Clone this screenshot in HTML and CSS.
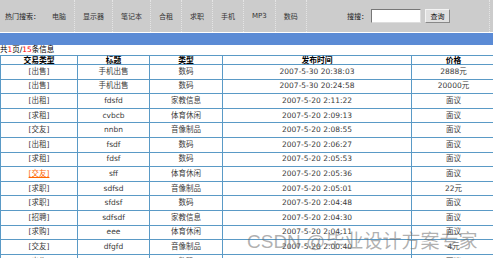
FILE: index.html
```html
<!DOCTYPE html>
<html lang="zh-CN">
<head>
    <meta charset="UTF-8">
    <title>信息列表</title>
    <link rel="stylesheet" href="styles.css">
</head>
<body>
    <div class="topbar">
        <span class="hot-label">热门搜索：</span>
        <ul class="hot-list">
            <li><a href="#">电脑</a></li>
            <li><a href="#">显示器</a></li>
            <li><a href="#">笔记本</a></li>
            <li><a href="#">合租</a></li>
            <li><a href="#">求职</a></li>
            <li><a href="#">手机</a></li>
            <li><a href="#">MP3</a></li>
            <li><a href="#">数码</a></li>
        </ul>
        <form class="search">
            <label for="kw">搜搜：</label>
            <input id="kw" type="text">
            <button type="button">查询</button>
        </form>
    </div>
    <div class="bluebar"></div>

    <div class="pager">共<span class="num">1</span>页/<span class="num">15</span>条信息</div>

    <table class="list">
        <colgroup>
            <col class="c-type">
            <col class="c-title">
            <col class="c-cat">
            <col class="c-time">
            <col class="c-price">
        </colgroup>
        <tr>
            <th>交易类型</th>
            <th>标题</th>
            <th>类型</th>
            <th>发布时间</th>
            <th>价格</th>
        </tr>
        <tr><td>[出售]</td><td>手机出售</td><td>数码</td><td>2007-5-30 20:38:03</td><td>2888元</td></tr>
        <tr><td>[出售]</td><td>手机出售</td><td>数码</td><td>2007-5-30 20:24:58</td><td>20000元</td></tr>
        <tr><td>[出租]</td><td>fdsfd</td><td>家教信息</td><td>2007-5-20 2:11:22</td><td>面议</td></tr>
        <tr><td>[求租]</td><td>cvbcb</td><td>体育休闲</td><td>2007-5-20 2:09:13</td><td>面议</td></tr>
        <tr><td>[交友]</td><td>nnbn</td><td>音像制品</td><td>2007-5-20 2:08:55</td><td>面议</td></tr>
        <tr><td>[出租]</td><td>fsdf</td><td>数码</td><td>2007-5-20 2:06:27</td><td>面议</td></tr>
        <tr><td>[求租]</td><td>fdsf</td><td>数码</td><td>2007-5-20 2:05:53</td><td>面议</td></tr>
        <tr><td><a class="hover" href="#">[交友]</a></td><td>sff</td><td>体育休闲</td><td>2007-5-20 2:05:36</td><td>面议</td></tr>
        <tr><td>[求职]</td><td>sdfsd</td><td>音像制品</td><td>2007-5-20 2:05:01</td><td>22元</td></tr>
        <tr><td>[求职]</td><td>sfdsf</td><td>数码</td><td>2007-5-20 2:04:48</td><td>面议</td></tr>
        <tr><td>[招聘]</td><td>sdfsdf</td><td>家教信息</td><td>2007-5-20 2:04:30</td><td>面议</td></tr>
        <tr><td>[求购]</td><td>eee</td><td>体育休闲</td><td>2007-5-20 2:04:11</td><td>面议</td></tr>
        <tr><td>[交友]</td><td>dfgfd</td><td>音像制品</td><td>2007-5-20 2:00:40</td><td>4元</td></tr>
        <tr><td>[出售]</td><td>asdf</td><td>数码</td><td>2007-5-20 1:58:12</td><td>面议</td></tr>
        <tr><td>[求购]</td><td>sdf</td><td>家教信息</td><td>2007-5-20 1:57:36</td><td>面议</td></tr>
    </table>

    <div class="watermark">CSDN @毕业设计方案专家</div>
</body>
</html>
```

FILE: styles.css
```css
html, body {
    margin: 0;
    height: 100%;
}

body {
    position: relative;
    overflow: hidden;
    background: #ffffff;
    color: #333333;
    font-family: "DejaVu Sans", "Noto Sans CJK SC", sans-serif;
    font-size: 7.5px;
}

a {
    color: #333333;
    text-decoration: none;
}

/* top search bar */
.topbar {
    display: flex;
    align-items: stretch;
    height: 32px;
    background: #cccccc;
    font-size: 7px;
}

.hot-label {
    display: flex;
    align-items: center;
    padding: 0 6px 0 5px;
    color: #222222;
}

.hot-list {
    display: flex;
    margin: 0;
    padding: 0;
    list-style: none;
}

.hot-list li {
    display: flex;
    align-items: center;
    padding: 0 8px;
    border-right: 1px dotted #e4e4e4;
}

.hot-list li:first-child {
    padding-left: 6px;
}

.search {
    display: flex;
    align-items: center;
    margin: 0 3px 0 auto;
    padding-right: 39px;
    border-right: 1px dotted #e4e4e4;
}

.search label {
    color: #222222;
    margin-right: 3px;
}

.search input {
    width: 48px;
    height: 12px;
    margin: 0;
    padding: 0;
    border: 1px solid #777777;
    border-right-color: #dddddd;
    border-bottom-color: #dddddd;
    background: #ffffff;
}

.search button {
    width: 25px;
    height: 14px;
    margin: 0 0 0 4px;
    padding: 0;
    border: 1px solid #888888;
    border-top-color: #f4f4f4;
    border-left-color: #f4f4f4;
    background: #e0e0e0;
    font-family: inherit;
    font-size: 7px;
    color: #111111;
}

.bluebar {
    height: 12px;
    margin-top: 1px;
    background: #5b8bd5;
}

.pager {
    height: 10px;
    line-height: 10px;
    color: #000000;
    font-size: 7.5px;
}

.pager .num {
    color: #ff0000;
}

/* listing table */
.list {
    width: 495px;
    border-collapse: collapse;
    table-layout: fixed;
}

.c-type { width: 77px; }
.c-title { width: 72px; }
.c-cat { width: 73px; }
.c-time { width: 189px; }
.c-price { width: 84px; }

.list th,
.list td {
    padding: 0;
    border: 1px solid #5a9ac6;
    text-align: center;
    white-space: nowrap;
}

.list th {
    height: 8px;
    line-height: 7px;
    font-size: 7.8px;
    font-weight: bold;
    color: #000000;
}

.list td {
    height: 13.6px;
    line-height: 12px;
    color: #3a3a3a;
}

.list a.hover {
    color: #ff6600;
    text-decoration: underline;
}

.watermark {
    position: absolute;
    left: 247px;
    top: 226px;
    font-family: "Liberation Sans", "Noto Sans CJK SC", sans-serif;
    font-size: 19px;
    color: rgba(110, 110, 110, 0.55);
    white-space: nowrap;
}
```
